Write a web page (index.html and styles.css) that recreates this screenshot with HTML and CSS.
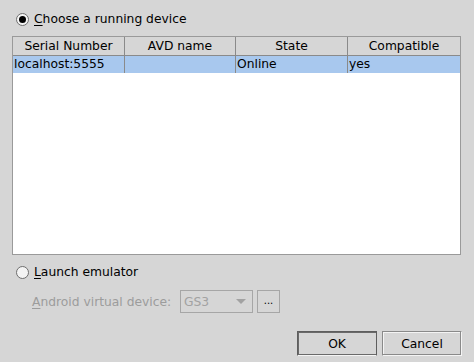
FILE: index.html
```html
<!DOCTYPE html>
<html>
<head>
<meta charset="utf-8">
<link rel="stylesheet" href="styles.css">
</head>
<body>
<div class="dialog">
  <div class="radio-row first">
    <span class="radio checked"></span>
    <span class="label"><u>C</u>hoose a running device</span>
  </div>
  <div class="table">
    <div class="row header">
      <div class="cell c1">Serial Number</div>
      <div class="cell c2">AVD name</div>
      <div class="cell c3">State</div>
      <div class="cell c4">Compatible</div>
    </div>
    <div class="row selected">
      <div class="cell c1">localhost:5555</div>
      <div class="cell c2"></div>
      <div class="cell c3">Online</div>
      <div class="cell c4">yes</div>
    </div>
  </div>
  <div class="radio-row second">
    <span class="radio"></span>
    <span class="label"><u>L</u>aunch emulator</span>
  </div>
  <div class="avd-row">
    <span class="disabled-label"><u>A</u>ndroid virtual device:</span>
    <div class="combo"><span>GS3</span><span class="arrow"></span></div>
    <div class="more">...</div>
  </div>
  <div class="buttons">
    <div class="btn default">OK</div>
    <div class="btn">Cancel</div>
  </div>
</div>
</body>
</html>
```

FILE: styles.css
```css
html, body {
  margin: 0;
  padding: 0;
  background: #d6d6d6;
}
body {
  width: 474px;
  height: 362px;
  font-family: "DejaVu Sans", sans-serif;
  font-size: 12.3px;
  color: #000;
  overflow: hidden;
}
.dialog {
  padding: 0 12px 0 12px;
  display: flex;
  flex-direction: column;
}
.radio-row {
  display: flex;
  align-items: center;
  height: 16px;
}
.radio-row.first {
  margin-top: 11px;
  margin-bottom: 9px;
}
.radio-row.second {
  margin-top: 9px;
}
.radio {
  width: 11px;
  height: 11px;
  border: 1px solid #6e6e6e;
  border-radius: 50%;
  background: #f4f4f4;
  margin-left: 4px;
  margin-right: 5px;
  position: relative;
  box-sizing: content-box;
}
.radio.checked::after {
  content: "";
  position: absolute;
  left: 2px;
  top: 2px;
  width: 7px;
  height: 7px;
  border-radius: 50%;
  background: #000;
}
.label u, .disabled-label u {
  text-decoration: underline;
  text-underline-offset: 2px;
}
.table {
  width: 447px;
  height: 217px;
  border: 1px solid #9a9a9a;
  background: #fff;
}
.row {
  display: flex;
}
.header {
  height: 18px;
  background: #d6d6d6;
  border-bottom: 1px solid #8a8a8a;
}
.header .cell {
  text-align: center;
  border-right: 1px solid #8a8a8a;
  line-height: 18px;
}
.header .cell.c4 {
  border-right: none;
}
.selected {
  height: 17px;
  background: #a8c8ee;
}
.selected .cell {
  line-height: 16px;
  border-right: 1px solid #8a8a8a;
  padding-left: 1px;
}
.selected .cell.c4 {
  border-right: none;
}
.cell {
  box-sizing: border-box;
  white-space: nowrap;
  overflow: hidden;
}
.c1 { width: 112px; }
.c2 { width: 111px; }
.c3 { width: 112px; }
.c4 { flex: 1; }
.avd-row {
  display: flex;
  align-items: center;
  margin-top: 10px;
  padding-left: 20px;
  height: 23px;
}
.disabled-label {
  color: #9c9c9c;
  width: 148px;
}
.combo {
  border: 1px solid #a6a6a6;
  display: flex;
  align-items: center;
  justify-content: space-between;
  color: #a2a2a2;
  padding: 0 6px 0 3px;
  box-sizing: border-box;
  width: 73px;
  height: 23px;
}
.arrow {
  width: 0;
  height: 0;
  border-left: 5px solid transparent;
  border-right: 5px solid transparent;
  border-top: 5px solid #a2a2a2;
}
.more {
  margin-left: 4px;
  width: 23px;
  height: 23px;
  box-sizing: border-box;
  border: 1px solid #a6a6a6;
  display: flex;
  align-items: center;
  justify-content: center;
  font-size: 10px;
  padding-bottom: 3px;
}
.buttons {
  display: flex;
  justify-content: flex-end;
  gap: 5px;
  margin-top: 18px;
}
.btn {
  width: 80px;
  height: 25px;
  box-sizing: border-box;
  border: 1px solid #8a8a8a;
  border-right-color: #f4f4f4;
  border-bottom-color: #f4f4f4;
  box-shadow: inset -1px -1px 0 #8a8a8a, inset 1px 1px 0 #f4f4f4;
  display: flex;
  align-items: center;
  justify-content: center;
}
.btn.default {
  border: 1px solid #5e5e5e;
  border-bottom-color: #f4f4f4;
  box-shadow: inset 1px 1px 0 #6a6a6a, inset 0 -1px 0 #6a6a6a;
}
```
